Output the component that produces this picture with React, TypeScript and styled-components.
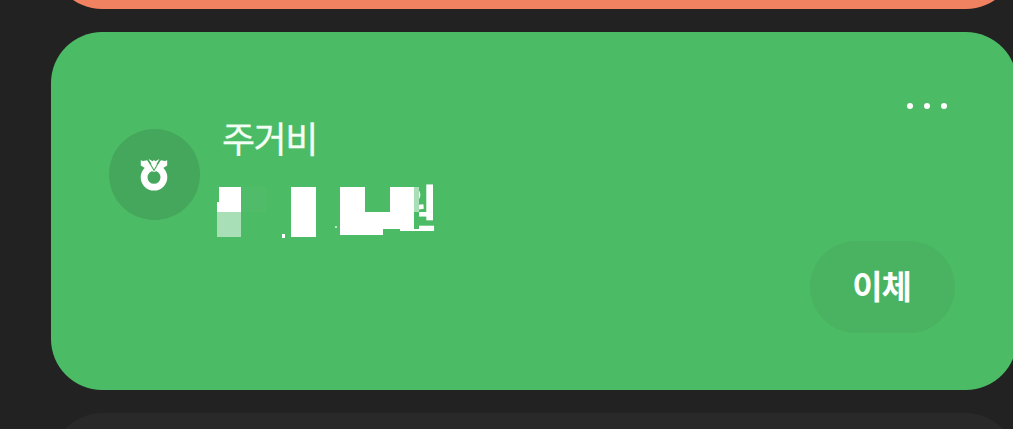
import * as React from 'react';
import styled, { createGlobalStyle } from 'styled-components';

const GlobalStyle = createGlobalStyle`
    * {
        box-sizing: border-box;
    }
    body {
        margin: 0;
        overflow: hidden;
        background: #222222;
        font-family: "Noto Sans CJK KR", sans-serif;
    }
`;

function BankLogo() {
    return (
        <svg width="28" height="34" viewBox="0 0 28 34">
            <circle cx="14" cy="20.3" r="9.9" fill="none" stroke="#fff" strokeWidth="6.8" />
            <path d="M0.8 3.2L3 4L7.2 3.2L14 13L20.8 3.2L25 4L27.2 3.2V8.5L21.5 12L14 15L6.5 12L0.8 8.5Z" fill="#fff" />
            <path d="M7.7 2.5L14 13.5L20.3 2.5" fill="none" stroke="#44a75b" strokeWidth="1.1" />
            <path d="M8.6 2L12.6 4.2L14 3L15.4 4.2L19.4 2L14 11.3Z" fill="#fff" />
        </svg>
    )
}

// blocks that hide the digits of the balance
function HiddenAmount() {
    return (
        <Mosaic width="220" height="56" viewBox="215 182 220 56" shapeRendering="crispEdges">
            <path d="M383 182H419V238H383Z" fill="#4cbb66" />
            <path d="M219 187H241V212H217V202H219Z" fill="#fff" />
            <path d="M217 212H241V237H217Z" fill="#a8dfb6" />
            <path d="M241 187H266V212H241Z" fill="#50bc69" />
            <path d="M282 234H285V238H282Z" fill="#fff" />
            <path d="M291 187H316V237H291Z" fill="#fff" />
            <path d="M335 226H337V228H335Z" fill="#b9e6c3" />
            <path d="M340 187H365V212H390V187H414V229H419V231H400V229H383V235H340Z" fill="#fff" />
            <path d="M414 187H419V212H414Z" fill="#a8dfb6" />
        </Mosaic>
    )
}

function App() {
    return (
        <Page>
            <GlobalStyle />
            <Card color="#f08261" />
            <Card color="#4cbb66">
                <Account>
                    <LogoCircle><BankLogo /></LogoCircle>
                    <Info>
                        <Name>주거비</Name>
                        <Balance>
                            <Won>원</Won>
                            <HiddenAmount />
                        </Balance>
                    </Info>
                </Account>
                <Actions>
                    <MoreButton aria-label="더보기">
                        <Dot /><Dot /><Dot />
                    </MoreButton>
                    <TransferButton>이체</TransferButton>
                </Actions>
            </Card>
            <Card color="#292929" />
        </Page>
    )
}

export default App;

const Page = styled.div`
    height: 429px;
    overflow: hidden;
    display: flex;
    flex-direction: column;
    justify-content: center;
    gap: 23px;
    padding: 0 0 7px 51px;
`;

const Card = styled.section<{ color: string }>`
    flex: none;
    display: flex;
    justify-content: space-between;
    width: 966px;
    height: 358.5px;
    padding: 70px 62px 57px 57.5px;
    border-radius: 51px;
    background: ${({ color }) => color};
`;

const Account = styled.div`
    display: flex;
    align-items: flex-start;
    padding-top: 27px;
`;

const LogoCircle = styled.div`
    display: flex;
    align-items: center;
    justify-content: center;
    width: 91px;
    height: 91px;
    border-radius: 50%;
    background: #44a75b;
`;

const Info = styled.div`
    margin: -16px 0 0 15.5px;
`;

const Name = styled.div`
    padding-left: 7px;
    color: #f3fff5;
    font-size: 36px;
    font-weight: 400;
    line-height: 48px;
    letter-spacing: -1.5px;
    -webkit-text-stroke: 0.3px #f3fff5;
`;

const Balance = styled.div`
    position: relative;
    display: flex;
    justify-content: flex-end;
    width: 220px;
    height: 56px;
    margin-top: 21px;
`;

const Won = styled.span`
    margin-right: -3px;
    color: #fff;
    font-size: 50px;
    font-weight: 700;
    line-height: 47px;
`;

const Mosaic = styled.svg`
    position: absolute;
    top: 0;
    left: 0;
`;

const Actions = styled.div`
    display: flex;
    flex-direction: column;
    justify-content: space-between;
    align-items: flex-end;
`;

const MoreButton = styled.button`
    display: flex;
    gap: 11px;
    padding: 1px 8px 0 0;
    border: none;
    background: none;
`;

const Dot = styled.span`
    width: 6px;
    height: 6px;
    border-radius: 50%;
    background: #fff;
`;

const TransferButton = styled.button`
    width: 145px;
    height: 92px;
    padding: 0 2px 5px 0;
    border: none;
    border-radius: 46px;
    background: #49b362;
    color: #fff;
    font-family: inherit;
    font-size: 33px;
    font-weight: 700;
    letter-spacing: -1px;
`;
